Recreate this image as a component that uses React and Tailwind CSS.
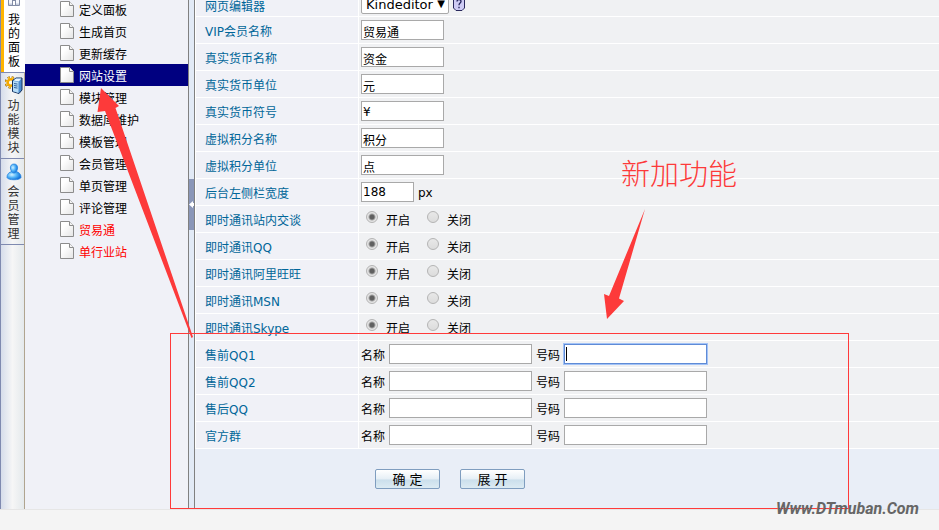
import React from 'react';

const menu = [
  { label: '定义面板' },
  { label: '生成首页' },
  { label: '更新缓存' },
  { label: '网站设置', active: true },
  { label: '模块管理' },
  { label: '数据库维护' },
  { label: '模板管理' },
  { label: '会员管理' },
  { label: '单页管理' },
  { label: '评论管理' },
  { label: '贸易通', red: true },
  { label: '单行业站', red: true },
];

const textFields = [
  { id: 'vip_name', label: 'VIP会员名称', value: '贸易通' },
  { id: 'money_name', label: '真实货币名称', value: '资金' },
  { id: 'money_unit', label: '真实货币单位', value: '元' },
  { id: 'money_sign', label: '真实货币符号', value: '¥' },
  { id: 'credit_name', label: '虚拟积分名称', value: '积分' },
  { id: 'credit_unit', label: '虚拟积分单位', value: '点' },
];

const switches = [
  { id: 'im_web', label: '即时通讯站内交谈' },
  { id: 'im_qq', label: '即时通讯QQ' },
  { id: 'im_ali', label: '即时通讯阿里旺旺' },
  { id: 'im_msn', label: '即时通讯MSN' },
  { id: 'im_skype', label: '即时通讯Skype' },
];

const contacts = [
  { id: 'presale1', label: '售前QQ1', focused: true },
  { id: 'presale2', label: '售前QQ2' },
  { id: 'aftersale', label: '售后QQ' },
  { id: 'group', label: '官方群' },
];

const PageIcon = () => (
  <svg width="16" height="16" viewBox="0 0 16 16" className="shrink-0" aria-hidden="true">
    <defs>
      <linearGradient id="sheet" x1="0" y1="0" x2="1" y2="1">
        <stop offset="0.3" stopColor="#ffffff" />
        <stop offset="1" stopColor="#e4e4e4" />
      </linearGradient>
    </defs>
    <path d="M0.5 0.5H9.500L13.500 4.500V15.500H0.500Z" fill="url(#sheet)" stroke="#8c8c8c" />
    <path d="M9.500 0.500V4.500H13.500" fill="#f4f4f4" stroke="#8c8c8c" />
  </svg>
);

const HomeIcon = () => (
  <svg width="16" height="16" viewBox="0 0 16 16" aria-hidden="true">
    <path d="M2.500 6V14.500H13.500V6L8 1.500Z" fill="#f6f8fc" stroke="#838da6" />
    <path d="M1 7.500L8 1L15 7.500" fill="none" stroke="#838da6" strokeWidth="1.500" />
    <path d="M3 12.500H13V14H3Z" fill="#c6cede" />
    <rect x="6.500" y="9.500" width="3" height="5" fill="#fff" stroke="#838da6" />
  </svg>
);

const ServerIcon = () => (
  <svg width="18" height="19" viewBox="0 0 18 19" aria-hidden="true">
    <circle cx="6" cy="6.500" r="5" fill="none" stroke="#8a5c00" strokeWidth="2.600" strokeDasharray="2.200 1.730" />
    <circle cx="6" cy="6.500" r="3.300" fill="#fffbe8" stroke="#f5a800" strokeWidth="2.400" />
    <circle cx="6" cy="6.500" r="5" fill="none" stroke="#ffc531" strokeWidth="1.800" strokeDasharray="1.600 2.330" strokeDashoffset="-0.300" />
    <path d="M7.500 4.500L11 2H17V14L14 17.500L7.500 15.500Z" fill="#4a8bd0" stroke="#14305c" />
    <path d="M8 5L13.500 6V17L8 15.200Z" fill="#b5dcf7" />
    <path d="M8.500 4.500L11 2.600H16.400L13.800 5.600Z" fill="#e6f5ff" />
    <path d="M9 7.500L12.500 8.100M9 9.500L12.500 10.100M9 11.500L12.500 12.100" stroke="#2d5f9c" />
  </svg>
);

const MemberIcon = () => (
  <svg width="16" height="18" viewBox="0 0 16 18" aria-hidden="true">
    <defs>
      <radialGradient id="member" cx="0.35" cy="0.4" r="0.65">
        <stop offset="0" stopColor="#d5f2ff" />
        <stop offset="0.5" stopColor="#55b6f8" />
        <stop offset="1" stopColor="#0f6fd8" />
      </radialGradient>
    </defs>
    <path d="M1 14.500C0.800 11.500 3 9 6 8.500H10C13 9 15.200 11.500 15 14.500C14 17.500 2 17.500 1 14.500Z" fill="url(#member)" stroke="#2b86df" strokeWidth="0.800" />
    <path d="M8 1C10.500 1 11.800 2.800 11.600 5C11.400 7.500 10 10 8 10C6 10 4.600 7.500 4.400 5C4.200 2.800 5.500 1 8 1Z" fill="url(#member)" stroke="#2b86df" strokeWidth="0.800" />
  </svg>
);

const HelpIcon = () => (
  <svg width="12" height="15" viewBox="0 0 12 15" aria-hidden="true">
    <path d="M2.500 0.500H9.500L11.500 3V12L9 14.500H3L0.500 12V3Z" fill="#cfccf5" stroke="#29295c" />
    <path d="M4 5.500C4 3 8 3 8 5.500C8 7.200 6 7 6 9.200M6 10.800V12.200" fill="none" stroke="#23235a" strokeWidth="1.300" />
  </svg>
);

const RailTab = ({ icon: Icon, label, className, textClass }) => (
  <a href="#" className={`flex flex-col items-center ${className}`}>
    <Icon />
    <span className={`w-3 text-xs leading-[14px] break-all ${textClass}`}>{label}</span>
  </a>
);

const Row = ({ id, label, children }) => (
  <div className="grid grid-cols-[162px_1fr] gap-px h-[26px]">
    <label htmlFor={id} className="flex items-center pl-[9px] pt-1 bg-[#f0f1f7] text-[#006699]">{label}</label>
    <div className="flex items-center pl-0.5 bg-[#f0f1f3]">{children}</div>
  </div>
);

const inputBase = 'h-5 border bg-white px-px outline-none';
const inputPlain = 'border-[#a9a9a9]';
const inputFocused = 'border-[#5f8bd6] ring-1 ring-[#a3c3f7] caret-transparent';
const radioBase =
  'appearance-none size-3 rounded-full border border-[#b4b4b4] bg-linear-to-b from-[#e8e8e8] to-[#dcdcdc] checked:bg-[radial-gradient(circle,#606060_0_2px,#e4e4e4_4px)] mb-1';
const buttonBase =
  'w-[65px] h-5 rounded-xs border border-[#7f9dbf] bg-[linear-gradient(#fff,#e6eff6_50%,#cbdfec_55%,#dcebf3)] text-[13px] leading-4 pt-0.5';

const Rail = () => (
  <nav className="w-[25px] shrink-0 border-l border-l-[#7f8ab0] border-r border-r-[#b0a48f] bg-linear-to-r from-[#d6ddeb] via-[#f6f6f6] to-[#e4e9ec]">
    <RailTab icon={HomeIcon} label="我的面板" className="h-[72px] -mr-px bg-white border-l-3 border-[#ffb400] pr-px *:first:-mt-[9px]" textClass="mt-1.5" />
    <RailTab icon={ServerIcon} label="功能模块" className="h-[86px] border-t border-[#7f8ab0] pt-[3px] pl-0.5" textClass="mt-1 text-[#333]" />
    <RailTab icon={MemberIcon} label="会员管理" className="h-[87px] border-y border-[#7f8ab0] pt-1 pl-0.5" textClass="mt-1 text-[#333]" />
  </nav>
);

const Menu = () => (
  <nav className="w-[163px] shrink-0 bg-[#f0f1f7]">
    <ul className="-mt-0.5">
      {menu.map((item) => (
        <li key={item.label} className={item.active ? 'bg-[#000080] text-white' : item.red ? 'text-[#ff0000]' : 'text-black'}>
          <a href="#" className="flex items-center gap-1 h-[22px] pl-[35px]">
            <PageIcon />
            <span className="-ml-px pt-1">{item.label}</span>
          </a>
        </li>
      ))}
    </ul>
  </nav>
);

const Splitter = () => (
  <div className="w-[7px] shrink-0 border-x border-[#808080] bg-[#e2eaf6] pt-[179px]">
    <button type="button" aria-label="收起" className="flex items-center w-full h-[51px] bg-[#8a96b8]">
      <svg width="5" height="7" viewBox="0 0 5 7"><path d="M0 3.500L4 0V2H5V5H4V7Z" fill="#fff" /></svg>
    </button>
  </div>
);

const Settings = () => (
  <form className="flex-1 min-w-0">
    <div className="bg-white flex flex-col gap-px pl-px pb-px">
      {/* First row is scrolled half out of view */}
      <div className="h-4 overflow-hidden flex flex-col justify-end">
        <Row id="editor" label="网页编辑器">
          <span className="relative flex mb-0.5">
            <select id="editor" className="appearance-none w-[88px] h-5 border border-[#a9a9a9] bg-white rounded-xs pl-1 pt-0.5 text-[13px] leading-4">
              <option>Kindeditor</option>
            </select>
            <span className="absolute right-1 top-0.5 text-[10px] pointer-events-none">▼</span>
          </span>
          <span className="ml-1 mb-1"><HelpIcon /></span>
        </Row>
      </div>

      {textFields.map((f) => (
        <Row key={f.id} id={f.id} label={f.label}>
          <input id={f.id} defaultValue={f.value} className={`${inputBase} ${inputPlain} w-[83px] pt-0.5`} />
        </Row>
      ))}

      <Row id="side_width" label="后台左侧栏宽度">
        <input id="side_width" defaultValue="188" className={`${inputBase} ${inputPlain} w-[53px]`} />
        <span className="ml-1 pt-0.5">px</span>
      </Row>

      {switches.map((s) => (
        <Row key={s.id} id={s.id} label={s.label}>
          <input type="radio" id={s.id} name={s.id} defaultChecked className={`${radioBase} ml-[5px]`} />
          <label htmlFor={s.id} className="ml-2 pt-1">开启</label>
          <input type="radio" id={`${s.id}_off`} name={s.id} className={`${radioBase} ml-[17px]`} />
          <label htmlFor={`${s.id}_off`} className="ml-2 pt-1">关闭</label>
        </Row>
      ))}

      {contacts.map((c) => (
        <Row key={c.id} id={c.id} label={c.label}>
          <label htmlFor={c.id} className="pt-1">名称</label>
          <input id={c.id} className={`${inputBase} ${inputPlain} w-[143px] mx-1`} />
          <label htmlFor={`${c.id}_no`} className="pt-1">号码</label>
          <span className="relative flex ml-1">
            <input id={`${c.id}_no`} className={`${inputBase} w-[143px] ${c.focused ? inputFocused : inputPlain}`} />
            {c.focused && <i className="absolute left-0.5 top-[3px] w-px h-3.5 bg-black" />}
          </span>
        </Row>
      ))}
    </div>

    <div className="h-[60px] bg-[#e9eef7] pt-5 pl-[180px] flex items-start gap-5">
      <button type="button" className={buttonBase}>确 定</button>
      <button type="button" className={buttonBase}>展 开</button>
    </div>
  </form>
);

// Red box, arrows and caption laid over the settings form
const Annotations = () => (
  <div className="absolute inset-0 pointer-events-none">
    <div className="absolute left-[170px] top-[333px] w-[679px] h-[176px] border border-[#ff3a3a]" />
    <svg className="absolute left-0 top-0" width="760" height="345" viewBox="0 0 760 345" fill="#fd3a3a">
      <path d="M101 88L119 106L115.500 108L193 337L191.500 338L105 111L97.500 112Z" />
      <path d="M645 209L619 298.500L624 301L607 319L604 294L609 296Z" />
    </svg>
    <p className="absolute left-[621px] top-[157px] text-[29px] leading-9 font-light text-[#fd3a3a] whitespace-nowrap">新加功能</p>
    <p className="absolute left-[776px] top-[499px] font-[Roboto] font-bold italic text-base leading-5 text-[#666]">Www.DTmuban.Com</p>
  </div>
);

export default function App() {
  return (
    <div className="relative min-h-screen overflow-hidden bg-[#f4f4f4] text-black text-xs leading-4 font-['DejaVu_Sans','Noto_Sans_CJK_SC',sans-serif]">
      <main className="flex border-b border-[#e6e6e6]">
        <Rail />
        <Menu />
        <Splitter />
        <Settings />
      </main>
      <Annotations />
    </div>
  );
}
